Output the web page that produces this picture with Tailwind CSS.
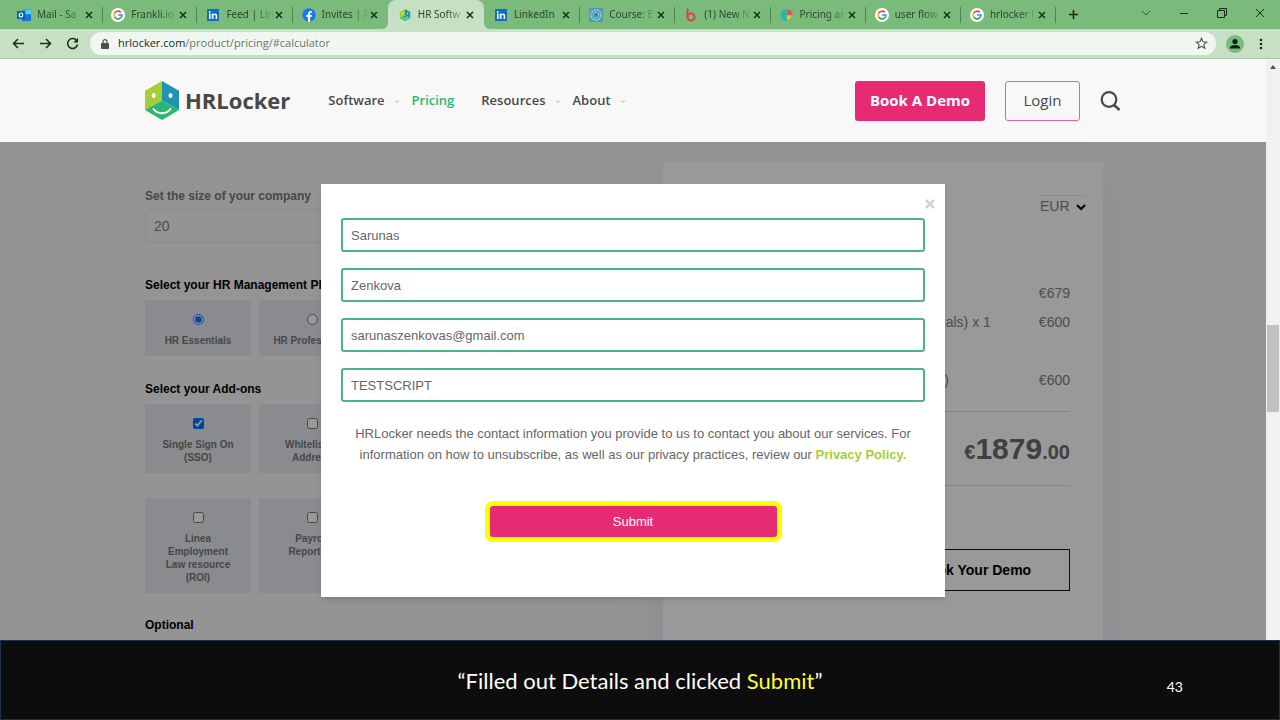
<!DOCTYPE html>
<html lang="en">
<head>
    <meta charset="UTF-8">
    <meta name="viewport" content="width=device-width, initial-scale=1.0">
    <title>HR Software Pricing - HRLocker</title>
    <script src="https://cdn.jsdelivr.net/npm/@tailwindcss/browser@4"></script>
</head>
<body class="flex h-screen flex-col overflow-hidden bg-white font-['Liberation_Sans',Arial,sans-serif] text-[13px] text-[#666]">

    <!-- Shared icons -->
    <svg class="hidden">
        <symbol id="close" viewBox="0 0 8 8"><path d="M1 1l6 6M7 1L1 7" fill="none" stroke="#1d2b1d" stroke-width="1.5"/></symbol>
        <symbol id="google" viewBox="0 0 14 14">
            <circle cx="7" cy="7" r="7" fill="#fff"/>
            <g fill="none" stroke-width="1.7">
                <path d="M9.8 4.4A3.9 3.9 0 0 0 3.6 5.2" stroke="#ea4335"/>
                <path d="M3.6 5.2a3.9 3.9 0 0 0 0 3.6" stroke="#fbbc05"/>
                <path d="M3.6 8.8a3.9 3.9 0 0 0 6 1.1" stroke="#34a853"/>
                <path d="M9.6 9.9A3.9 3.9 0 0 0 10.9 7H7.1" stroke="#4285f4"/>
            </g>
        </symbol>
        <symbol id="linkedin" viewBox="0 0 14 14">
            <rect x="1" y="1" width="12" height="12" rx="1" fill="#0a6fc2"/>
            <path d="M3 5.6h1.6V11H3zM5.8 5.6h1.5v.8c.4-.6 1-.9 1.7-.9 1.500 0 2.200.9 2.200 2.500V11H9.600V8.300c0-.8-.3-1.300-1-1.300s-1.200.5-1.200 1.300V11H5.800z" fill="#fff"/>
            <circle cx="3.800" cy="3.900" r=".95" fill="#fff"/>
        </symbol>
        <symbol id="hrlocker" viewBox="0 0 34 39">
            <path d="M17 0v19.500L0 29V9.700z" fill="#a6ce39"/>
            <path d="M17 0l17 9.700V29l-17-9.500z" fill="#1f93b0"/>
            <path d="M17 19.500L34 29l-17 10L0 29z" fill="#2bb673"/>
            <ellipse cx="8.700" cy="14.500" rx="2" ry="2.500" fill="#fff"/>
            <ellipse cx="25.500" cy="14.500" rx="2" ry="2.500" fill="#fff"/>
            <path d="M8.500 28c4 5.500 13 5.500 17 0" fill="none" stroke="#fff" stroke-width="2" stroke-linecap="round"/>
        </symbol>
        <symbol id="caret" viewBox="0 0 6 5"><path d="M1 1.300l2 2 2-2" fill="none" stroke="#ccc" stroke-width="1.200"/></symbol>
    </svg>

    <!-- Tab strip -->
    <div class="flex h-[29px] shrink-0 items-center bg-[#7aba7b] pl-[9px] font-['Noto_Sans','Open_Sans',sans-serif] text-[10px] text-[#2a472b]">
        <div class="flex h-full w-[1047px] items-stretch">
            <div class="flex min-w-0 flex-1 items-center pl-2">
                <svg class="mr-1.5 size-[14px] shrink-0" viewBox="0 0 14 14"><rect x="5" y="1" width="9" height="12" rx="1" fill="#28a8ea"/><path d="M5 7l9-1v6a1 1 0 0 1-1 1H5z" fill="#1277d3"/><rect x="9" y="2" width="5" height="4" fill="#50d0f5"/><rect y="3" width="8" height="8" rx="1" fill="#0a5db8"/><ellipse cx="4" cy="7" rx="1.700" ry="2" fill="none" stroke="#fff" stroke-width="1.200"/></svg>
                <span class="flex-1 whitespace-nowrap mask-r-from-60%">Mail - Sa</span>
                <button type="button" aria-label="Close tab" class="mr-[9px]"><svg class="size-2"><use href="#close"/></svg></button>
                <i class="h-4 w-px bg-[#4f8452]"></i>
            </div>
            <div class="flex min-w-0 flex-1 items-center pl-2">
                <svg class="mr-1.5 size-[14px] shrink-0"><use href="#google"/></svg>
                <span class="flex-1 whitespace-nowrap mask-r-from-60%">Frankli.io</span>
                <button type="button" aria-label="Close tab" class="mr-[9px]"><svg class="size-2"><use href="#close"/></svg></button>
                <i class="h-4 w-px bg-[#4f8452]"></i>
            </div>
            <div class="flex min-w-0 flex-1 items-center pl-[9px]">
                <svg class="mr-1.5 size-[14px] shrink-0"><use href="#linkedin"/></svg>
                <span class="flex-1 whitespace-nowrap mask-r-from-60%">Feed | Lin</span>
                <button type="button" aria-label="Close tab" class="mr-[9px]"><svg class="size-2"><use href="#close"/></svg></button>
                <i class="h-4 w-px bg-[#4f8452]"></i>
            </div>
            <div class="flex min-w-0 flex-1 items-center pl-[9px]">
                <svg class="mr-1.5 size-[14px] shrink-0" viewBox="0 0 14 14"><circle cx="7" cy="7" r="6.700" fill="#1877f2"/><path d="M6 13.700V9H4.300V7H6V5.500c0-1.700 1-2.600 2.500-2.600l1.400.1v1.700h-.8c-.8 0-1 .5-1 1V7h1.800l-.3 2H8.100v4.700z" fill="#fff"/></svg>
                <span class="flex-1 whitespace-nowrap mask-r-from-60%">Invites | F</span>
                <button type="button" aria-label="Close tab" class="mr-[9px]"><svg class="size-2"><use href="#close"/></svg></button>
                <i class="w-px"></i>
            </div>
            <div class="relative flex min-w-0 flex-1 items-center rounded-t-lg bg-[#c5e0c5] pl-[10px]">
                <svg class="absolute bottom-0 -left-1.5 size-1.5" viewBox="0 0 6 6"><path d="M6 0v6H0a6 6 0 0 0 6-6z" fill="#c5e0c5"/></svg>
                <svg class="absolute -right-1.5 bottom-0 size-1.5" viewBox="0 0 6 6"><path d="M0 0v6h6a6 6 0 0 1-6-6z" fill="#c5e0c5"/></svg>
                <svg class="mr-1.5 h-3 w-[14px] shrink-0"><use href="#hrlocker"/></svg>
                <span class="flex-1 whitespace-nowrap mask-r-from-60%">HR Softw</span>
                <button type="button" aria-label="Close tab" class="mr-[9px]"><svg class="size-2"><use href="#close"/></svg></button>
                <i class="w-px"></i>
            </div>
            <div class="flex min-w-0 flex-1 items-center pl-[10px]">
                <svg class="mr-1.5 size-[14px] shrink-0"><use href="#linkedin"/></svg>
                <span class="flex-1 whitespace-nowrap">LinkedIn</span>
                <button type="button" aria-label="Close tab" class="mr-[9px]"><svg class="size-2"><use href="#close"/></svg></button>
                <i class="h-4 w-px bg-[#4f8452]"></i>
            </div>
            <div class="flex min-w-0 flex-1 items-center pl-[9px]">
                <svg class="mr-1.5 size-[14px] shrink-0" viewBox="0 0 14 14"><rect width="14" height="14" fill="#4a9fb5"/><circle cx="7" cy="7" r="5" fill="none" stroke="#a5d3da" stroke-width="1.500" stroke-dasharray="2 1"/><circle cx="7" cy="7" r="2.600" fill="#2f86ad" stroke="#8cc6d0"/></svg>
                <span class="flex-1 whitespace-nowrap mask-r-from-60%">Course: E</span>
                <button type="button" aria-label="Close tab" class="mr-[9px]"><svg class="size-2"><use href="#close"/></svg></button>
                <i class="h-4 w-px bg-[#4f8452]"></i>
            </div>
            <div class="flex min-w-0 flex-1 items-center pl-[9px]">
                <svg class="mr-1.5 size-[14px] shrink-0" viewBox="0 0 14 14"><path d="M3.500 1.500V9" fill="none" stroke="#d8434e" stroke-width="2" stroke-linecap="round"/><circle cx="7" cy="9" r="3.500" fill="none" stroke="#d8434e" stroke-width="2"/></svg>
                <span class="flex-1 whitespace-nowrap mask-r-from-60%">(1) New N</span>
                <button type="button" aria-label="Close tab" class="mr-[9px]"><svg class="size-2"><use href="#close"/></svg></button>
                <i class="h-4 w-px bg-[#4f8452]"></i>
            </div>
            <div class="flex min-w-0 flex-1 items-center pl-[9px]">
                <svg class="mr-1.5 size-[14px] shrink-0" viewBox="0 0 14 14"><path d="M6.500 1v12a6 6 0 0 1 0-12z" fill="#22b8b0"/><path d="M7 1a5.700 5.700 0 0 1 5.700 6H7z" fill="#e8535a"/><path d="M7 7.500h4A4 4 0 0 1 7 11.500z" fill="#f3c33c"/></svg>
                <span class="flex-1 whitespace-nowrap mask-r-from-60%">Pricing ar</span>
                <button type="button" aria-label="Close tab" class="mr-[9px]"><svg class="size-2"><use href="#close"/></svg></button>
                <i class="h-4 w-px bg-[#4f8452]"></i>
            </div>
            <div class="flex min-w-0 flex-1 items-center pl-[9px]">
                <svg class="mr-1.5 size-[14px] shrink-0"><use href="#google"/></svg>
                <span class="flex-1 whitespace-nowrap mask-r-from-60%">user flow</span>
                <button type="button" aria-label="Close tab" class="mr-[9px]"><svg class="size-2"><use href="#close"/></svg></button>
                <i class="h-4 w-px bg-[#4f8452]"></i>
            </div>
            <div class="flex min-w-0 flex-1 items-center pl-[9px]">
                <svg class="mr-1.5 size-[14px] shrink-0"><use href="#google"/></svg>
                <span class="flex-1 whitespace-nowrap mask-r-from-60%">hrlocker l</span>
                <button type="button" aria-label="Close tab" class="mr-[9px]"><svg class="size-2"><use href="#close"/></svg></button>
                <i class="h-4 w-px bg-[#4f8452]"></i>
            </div>
        </div>
        <button type="button" aria-label="New tab" class="ml-3"><svg class="size-[11px]" viewBox="0 0 11 11"><path d="M5.500 1v9M1 5.500h9" stroke="#1d2b1d" stroke-width="1.600"/></svg></button>
        <!-- Window controls -->
        <div class="mr-[14px] mb-1 ml-auto flex items-center gap-[26px]">
            <button type="button" aria-label="Search tabs"><svg class="size-3" viewBox="0 0 12 12"><path d="M2 4l4 4 4-4" fill="none" stroke="#2f5a31"/></svg></button>
            <button type="button" aria-label="Minimize"><svg class="size-3" viewBox="0 0 12 12"><path d="M2 6.500h8" stroke="#1d2b1d"/></svg></button>
            <button type="button" aria-label="Restore"><svg class="size-3" viewBox="0 0 12 12"><path d="M1.500 3.500h7v7h-7zM3.500 3.500v-2h7v7h-2" fill="none" stroke="#1d2b1d"/></svg></button>
            <button type="button" aria-label="Close window"><svg class="size-3" viewBox="0 0 12 12"><path d="M2 2l8 8M10 2l-8 8" stroke="#1d2b1d"/></svg></button>
        </div>
    </div>

    <!-- Address bar -->
    <div class="flex h-[30px] shrink-0 items-center border-b border-[#a9c9a9] bg-[#c5e0c5] pr-[17px] pl-3">
        <div class="flex items-center gap-[14px]">
            <button type="button" aria-label="Back"><svg class="size-[13px]" viewBox="0 0 13 13"><path d="M12 6.500H1.500M6 2L1.500 6.500 6 11" fill="none" stroke="#1d2b1d" stroke-width="1.500"/></svg></button>
            <button type="button" aria-label="Forward"><svg class="size-[13px]" viewBox="0 0 13 13"><path d="M1 6.500h10.500M7 2l4.500 4.500L7 11" fill="none" stroke="#1d2b1d" stroke-width="1.500"/></svg></button>
            <button type="button" aria-label="Reload"><svg class="size-[13px]" viewBox="0 0 13 13"><path d="M10.800 3.800A5 5 0 1 0 11.500 7.500" fill="none" stroke="#1d2b1d" stroke-width="1.500"/><path d="M12 .8V5.500H7.300z" fill="#1d2b1d"/></svg></button>
        </div>
        <div class="ml-[11px] flex h-[23px] flex-1 items-center rounded-full bg-[#f0f7f0] pr-2 pl-[11px] font-['Open_Sans','Noto_Sans',sans-serif] text-[11px] text-[#6c756c]">
            <svg class="mr-[9px] h-[10px] w-2" viewBox="0 0 8 10"><rect y="4" width="8" height="6" rx="1" fill="#4d524d"/><path d="M2 4V2.600a2 2 0 0 1 4 0V4" fill="none" stroke="#4d524d" stroke-width="1.200"/></svg>
            <a href="#calculator"><span class="text-[#202620]">hrlocker.com</span>/product/pricing/#calculator</a>
            <button type="button" aria-label="Bookmark" class="ml-auto"><svg class="size-[13px]" viewBox="0 0 13 13"><path d="M6.500 1.300l1.500 3.500 3.800.3-2.900 2.500.9 3.700-3.300-2-3.300 2 .9-3.700L1.200 5.100 5 4.800z" fill="none" stroke="#4d524d" stroke-width="1.100"/></svg></button>
        </div>
        <button type="button" aria-label="Profile" class="ml-[10px]"><svg class="size-[18px]" viewBox="0 0 18 18"><circle cx="9" cy="9" r="9" fill="#7aba7b"/><circle cx="9" cy="6.500" r="2.600" fill="#0f1f10"/><path d="M3.800 13.500c0-2.500 2.300-3.500 5.200-3.500s5.200 1 5.200 3.500z" fill="#0f1f10"/></svg></button>
        <button type="button" aria-label="Menu" class="ml-[15px]"><svg class="h-3 w-1" viewBox="0 0 4 12"><g fill="#1d2b1d"><circle cx="2" cy="2" r="1.300"/><circle cx="2" cy="6" r="1.300"/><circle cx="2" cy="10" r="1.300"/></g></svg></button>
    </div>

    <div class="flex min-h-0 flex-1">
        <div class="flex min-w-0 flex-1 flex-col">
            <!-- Site header -->
            <header class="flex h-[83px] shrink-0 items-center justify-center bg-[#f8f8f8] font-['Open_Sans','Noto_Sans',sans-serif] text-[#484848]">
                <div class="flex w-full max-w-[976px] items-center">
                    <a href="#" class="flex items-center text-[22px] leading-[39px] font-bold">
                        <svg class="mr-1.5 h-[39px] w-[34px]"><use href="#hrlocker"/></svg>HRLocker
                    </a>
                    <nav class="ml-[38px] flex gap-[27px] text-[13px] font-semibold">
                        <a href="#" class="relative">Software<svg class="absolute top-2 -right-[15px] h-[5px] w-1.5"><use href="#caret"/></svg></a>
                        <a href="#" class="text-[#2bb673]">Pricing</a>
                        <a href="#" class="relative">Resources<svg class="absolute top-2 -right-[15px] h-[5px] w-1.5"><use href="#caret"/></svg></a>
                        <a href="#" class="relative">About<svg class="absolute top-2 -right-[15px] h-[5px] w-1.5"><use href="#caret"/></svg></a>
                    </nav>
                    <a href="#" class="ml-auto flex h-10 w-[130px] items-center justify-center rounded-[3px] bg-[#e62b73] text-[15px] font-bold text-white">Book A Demo</a>
                    <a href="#" class="ml-5 flex h-10 w-[75px] items-center justify-center rounded-[3px] border border-[#e0659a] text-[15px] font-medium">Login</a>
                    <button type="button" aria-label="Search" class="ml-5"><svg class="size-[21px]" viewBox="0 0 21 21"><circle cx="9" cy="9.500" r="7.300" fill="none" stroke="#484848" stroke-width="2.200"/><path d="M14 15l5.500 5" stroke="#484848" stroke-width="2.500"/></svg></button>
                </div>
            </header>

            <main class="relative min-h-0 flex-1 overflow-hidden bg-[#f7f7f7]">
                <div class="mx-auto flex h-full w-full max-w-[976px]">
                    <!-- Calculator options -->
                    <form class="w-[448px] shrink-0 pt-[45px] text-xs leading-[18px] font-bold text-black">
                        <label for="size" class="block text-[#777]">Set the size of your company</label>
                        <input type="text" id="size" value="20" class="mt-1 block h-[34px] w-full rounded-[3px] border border-[#e6e6e6] px-2 text-sm font-normal text-[#808080]">

                        <h2 class="mt-[33px]">Select your HR Management Plan</h2>
                        <div class="mt-1.5 grid grid-cols-4 gap-2 text-center text-[10px] leading-[13px] text-[#777]">
                            <label class="bg-[#e4e8ee] px-3 pt-[14px] pb-[9px]"><input type="radio" name="plan" checked class="mx-auto mb-[9px] block size-[11px]">HR Essentials</label>
                            <label class="bg-[#e4e8ee] px-3 pt-[14px] pb-[9px]"><input type="radio" name="plan" class="mx-auto mb-[9px] block size-[11px]">HR Professional</label>
                        </div>

                        <h2 class="mt-6">Select your Add-ons</h2>
                        <div class="mt-1.5 grid grid-cols-4 gap-x-2 gap-y-[25px] text-center text-[10px] leading-[13px] text-[#777]">
                            <label class="bg-[#e4e8ee] px-4 pt-[14px] pb-[9px]"><input type="checkbox" checked class="mx-auto mb-[9px] block size-[11px]">Single Sign On (SSO)</label>
                            <label class="bg-[#e4e8ee] px-4 pt-[14px] pb-[9px]"><input type="checkbox" class="mx-auto mb-[9px] block size-[11px]">Whitelist IP Address</label>
                            <label class="col-start-1 bg-[#e4e8ee] px-4 pt-[14px] pb-[9px]"><input type="checkbox" class="mx-auto mb-[9px] block size-[11px]">Linea Employment Law resource (ROI)</label>
                            <label class="bg-[#e4e8ee] px-4 pt-[14px] pb-[9px]"><input type="checkbox" class="mx-auto mb-[9px] block size-[11px]">Payroll Reporting</label>
                        </div>

                        <h2 class="mt-[23px]">Optional</h2>
                    </form>

                    <!-- Price summary -->
                    <section class="mt-5 mr-[18px] ml-auto w-[440px] bg-white px-[33px] pt-[33px] text-sm leading-[21px] text-[#808080] shadow-[0_20px_45px_#e6e6f0]">
                        <div class="-mr-4 flex justify-end">
                            <div class="relative border-t border-[#e6e6e6]">
                                <select aria-label="Currency" class="w-[46px] appearance-none text-sm leading-5"><option>EUR</option></select>
                                <svg class="pointer-events-none absolute top-2 right-0 h-[7px] w-[10px]" viewBox="0 0 10 7"><path d="M1 1l4 4 4-4" fill="none" stroke="#000" stroke-width="2"/></svg>
                            </div>
                        </div>
                        <div class="mt-[66px] flex justify-end">€679</div>
                        <div class="mt-2 flex justify-end"><span class="pr-12">Onboarding (HR Essentials) x 1</span>€600</div>
                        <div class="mt-[37px] flex justify-end"><span class="pr-[90px]">Set-up (one-off)</span>€600</div>
                        <div class="mt-5 flex h-[75px] items-center justify-end border-y border-[#e0e0e0] font-bold text-[#6c6c6c]">
                            <p class="text-xl">€<span class="text-[30px]">1879</span>.00</p>
                        </div>
                        <button type="button" class="mt-[63px] ml-auto block h-[42px] w-[190px] border border-[#111] text-sm font-bold text-black">Book Your Demo</button>
                    </section>
                </div>

                <!-- Contact details dialog -->
                <div class="absolute inset-0 bg-black/40 pt-[42px]">
                    <form role="dialog" aria-label="Contact details" class="relative mx-auto w-full max-w-[624px] bg-white px-5 pt-[34px] pb-[60px] shadow-md">
                        <button type="button" aria-label="Close" class="absolute top-[15px] right-[10px]"><svg class="size-[10px]" viewBox="0 0 10 10"><path d="M1 1l8 8M9 1L1 9" stroke="#d4d4d4" stroke-width="2.500"/></svg></button>
                        <div class="flex flex-col gap-4 text-[13px]">
                            <input type="text" aria-label="First name" value="Sarunas" class="h-[34px] rounded-[3px] border-2 border-[#4bb38a] px-2">
                            <input type="text" aria-label="Last name" value="Zenkova" class="h-[34px] rounded-[3px] border-2 border-[#4bb38a] px-2">
                            <input type="email" aria-label="Email" value="sarunaszenkovas@gmail.com" class="h-[34px] rounded-[3px] border-2 border-[#4bb38a] px-2">
                            <input type="text" aria-label="Company" value="TESTSCRIPT" class="h-[34px] rounded-[3px] border-2 border-[#4bb38a] px-2">
                        </div>
                        <p class="mt-[21px] text-center text-[13px] leading-[21px]">HRLocker needs the contact information you provide to us to contact you about our services. For<br>information on how to unsubscribe, as well as our privacy practices, review our <a href="#" class="font-bold text-[#a6ce39]">Privacy Policy.</a></p>
                        <button type="submit" class="mx-auto mt-[41px] block h-[31px] w-[287px] rounded-[3px] bg-[#e62b73] text-[13px] text-white ring-5 ring-[#ffff00]">Submit</button>
                    </form>
                </div>
            </main>
        </div>

        <!-- Page scrollbar -->
        <div class="flex w-[14px] shrink-0 flex-col items-center bg-[#f1f1f1]">
            <svg class="mt-1.5 h-1 w-1.5" viewBox="0 0 6 4"><path d="M3 0l3 4H0z" fill="#505050"/></svg>
            <div class="mt-64 h-[87px] w-3 bg-[#c1c1c1]"></div>
        </div>
    </div>

    <!-- Caption -->
    <footer class="relative flex h-20 shrink-0 items-center justify-center border border-[#1f2f52] bg-[#0d0d0d] font-['Lato',Carlito,sans-serif] text-[22px] text-white">
        <p>“Filled out Details and clicked <span class="text-[#ffff33]">Submit</span>”</p>
        <span class="absolute right-24 bottom-[22px] text-sm">43</span>
    </footer>
</body>
</html>
